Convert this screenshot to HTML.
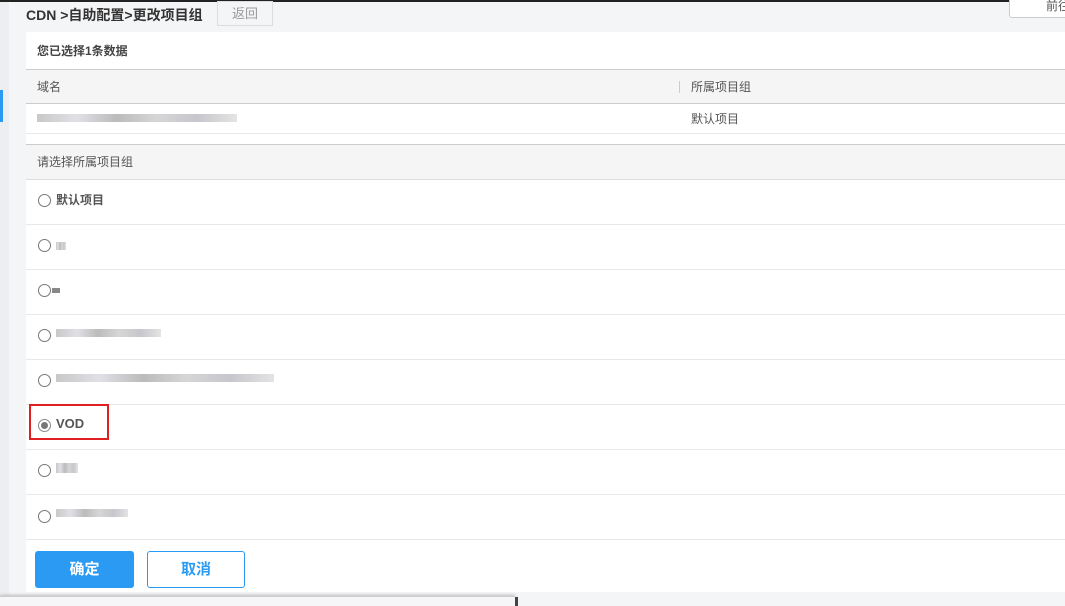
<!DOCTYPE html>
<html><head><meta charset="utf-8"><style>
*{margin:0;padding:0;box-sizing:border-box}
body{width:1065px;height:606px;overflow:hidden;background:#f4f5f7;font-family:"Liberation Sans","Noto Sans CJK SC",sans-serif;position:relative;color:#333}
.abs{position:absolute}
.panel{left:26px;top:32px;width:1039px;height:560px;background:#fff}
.t{font-size:12px;color:#555}
.radio{width:13px;height:13px;border:1px solid #777;border-radius:50%;background:#fff}
.row{left:26px;width:1039px;height:45px;border-bottom:1px solid #e8e8e8}
.blur{height:8px;background:linear-gradient(90deg,#bbb,#d8d8e0,#aaa,#ccc,#b8b8c0,#ddd);opacity:.8}
</style></head><body>
<div class="abs" style="left:0;top:0;width:1065px;height:2px;background:#222"></div>
<div class="abs" style="left:0;top:2px;width:9px;height:604px;background:#eceef1"></div>
<div class="abs" style="left:0;top:90px;width:3px;height:32px;background:#2b9af3"></div>
<div class="abs" style="left:26px;top:5px;font-size:14px;font-weight:bold;color:#333">CDN &gt;自助配置&gt;更改项目组</div>
<div class="abs" style="left:217px;top:1px;width:56px;height:25px;border:1px solid #ddd;font-size:13px;color:#999;text-align:center;line-height:24px;background:#f4f5f7">返回</div>
<div class="abs" style="left:1009px;top:-4px;width:70px;height:22px;border:1px solid #ccc;border-radius:3px;background:#fff;font-size:12px;padding-left:36px;color:#555">前往</div>
<div class="abs panel"></div>
<div class="abs t" style="left:37px;top:42px;font-weight:bold;color:#444">您已选择1条数据</div>
<div class="abs" style="left:26px;top:69px;width:1039px;height:35px;background:#f5f5f5;border-top:1px solid #ccc;border-bottom:1px solid #ccc"></div>
<div class="abs t" style="left:37px;top:78px">域名</div>
<div class="abs" style="left:679px;top:81px;width:1px;height:12px;background:#ccc"></div>
<div class="abs t" style="left:691px;top:78px">所属项目组</div>
<div class="abs blur" style="left:37px;top:114px;width:200px"></div>
<div class="abs t" style="left:691px;top:110px">默认项目</div>
<div class="abs" style="left:26px;top:133px;width:1039px;height:1px;background:#e8e8e8"></div>
<div class="abs" style="left:26px;top:144px;width:1039px;height:36px;background:#f5f5f5;border-top:1px solid #ccc;border-bottom:1px solid #ddd"></div>
<div class="abs t" style="left:37px;top:153px">请选择所属项目组</div>

<div class="abs row" style="top:180px"></div>
<div class="abs row" style="top:225px"></div>
<div class="abs row" style="top:270px"></div>
<div class="abs row" style="top:315px"></div>
<div class="abs row" style="top:360px"></div>
<div class="abs row" style="top:405px"></div>
<div class="abs row" style="top:450px"></div>
<div class="abs row" style="top:495px"></div>

<div class="abs radio" style="left:38px;top:194px"></div>
<div class="abs t" style="left:56px;top:191px;font-weight:bold">默认项目</div>
<div class="abs radio" style="left:38px;top:239px"></div>
<div class="abs blur" style="left:56px;top:242px;width:10px"></div>
<div class="abs radio" style="left:38px;top:284px"></div>
<div class="abs" style="left:52px;top:288px;width:8px;height:5px;background:#888"></div>
<div class="abs radio" style="left:38px;top:329px"></div>
<div class="abs blur" style="left:56px;top:329px;width:105px"></div>
<div class="abs radio" style="left:38px;top:374px"></div>
<div class="abs blur" style="left:56px;top:374px;width:218px"></div>
<div class="abs radio" style="left:38px;top:419px;border-color:#888"></div>
<div class="abs" style="left:41px;top:422px;width:7px;height:7px;border-radius:50%;background:#777"></div>
<div class="abs t" style="left:56px;top:416px;font-weight:bold;font-size:13px">VOD</div>
<div class="abs" style="left:29px;top:404px;width:80px;height:36px;border:2px solid #e02020"></div>
<div class="abs radio" style="left:38px;top:464px"></div>
<div class="abs blur" style="left:56px;top:463px;width:22px;height:10px"></div>
<div class="abs radio" style="left:38px;top:510px"></div>
<div class="abs blur" style="left:56px;top:509px;width:72px"></div>

<div class="abs" style="left:35px;top:551px;width:99px;height:37px;background:#2b9af3;border-radius:3px;color:#fff;font-size:15px;font-weight:bold;text-align:center;line-height:37px">确定</div>
<div class="abs" style="left:147px;top:551px;width:98px;height:37px;border:1px solid #2b9af3;border-radius:3px;color:#2b9af3;font-size:15px;font-weight:bold;text-align:center;line-height:35px;background:#fff">取消</div>
<div class="abs" style="left:0;top:596px;width:515px;height:10px;background:#f6f6f8;border-top:1px solid #ccc;box-shadow:0 -1px 3px #bbb"></div>
<div class="abs" style="left:515px;top:597px;width:3px;height:9px;background:#444"></div>
</body></html>
